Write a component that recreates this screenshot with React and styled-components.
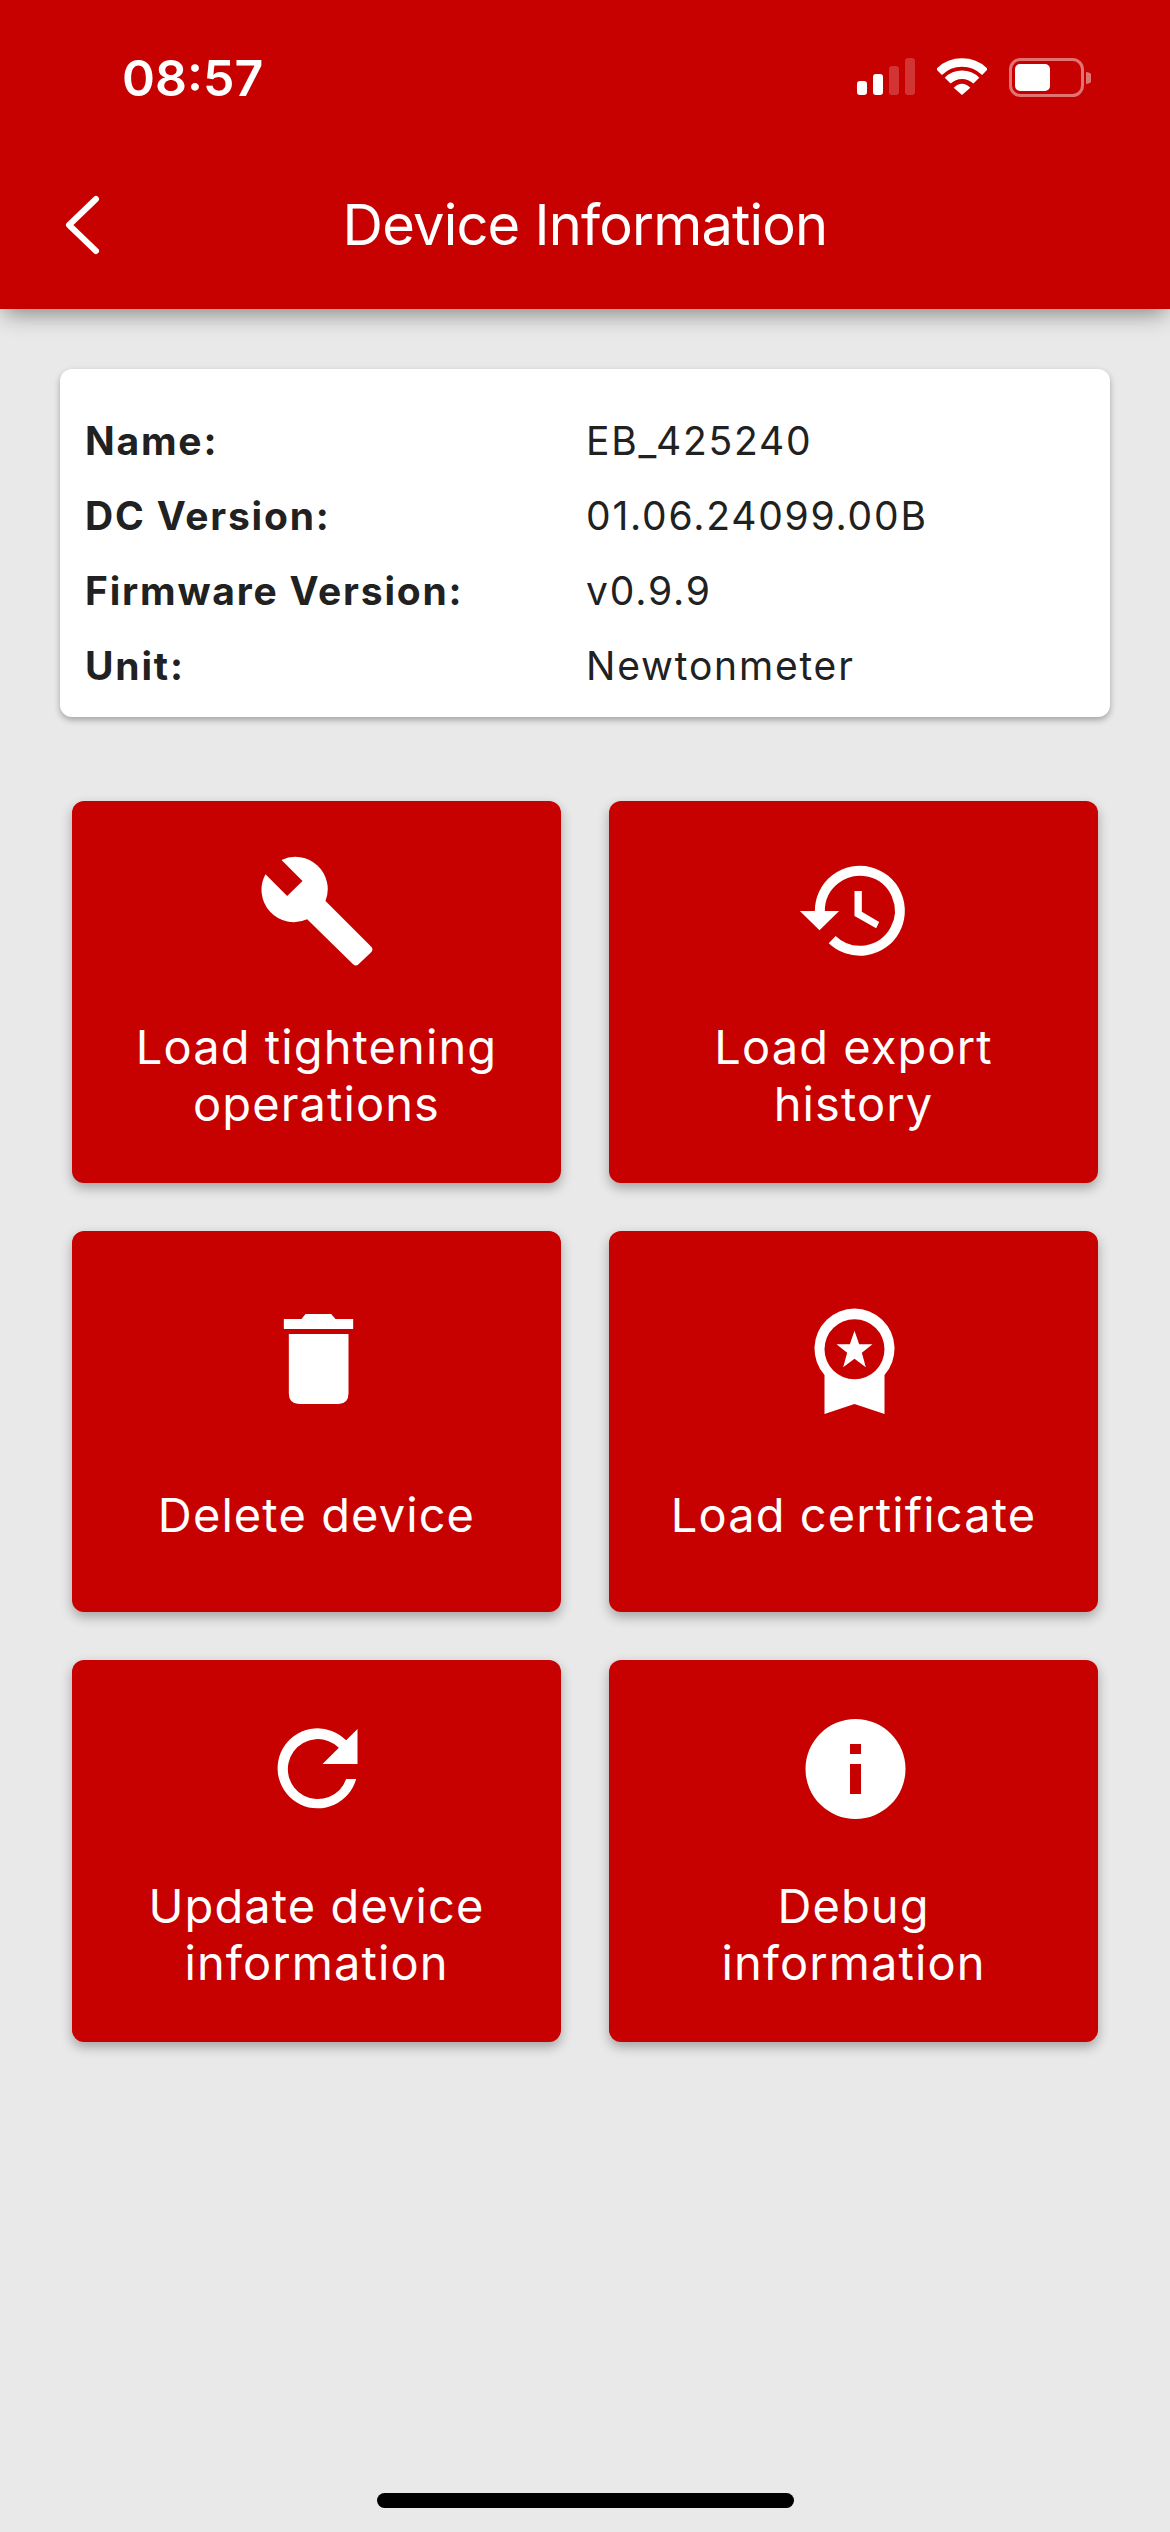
import React from 'react';
import styled, { createGlobalStyle } from 'styled-components';

const RED = '#c70000';

const GlobalStyle = createGlobalStyle`
  html, body {
    margin: 0;
    padding: 0;
    background: #e9e9e9;
  }
  body {
    font-family: Inter, "Liberation Sans", sans-serif;
  }
`;

const Page = styled.div`
  height: 2532px;
  display: flex;
  flex-direction: column;
  background: #e9e9e9;
  overflow: hidden;
`;

const Header = styled.header`
  height: 309px;
  flex-shrink: 0;
  box-sizing: border-box;
  background: ${RED};
  color: white;
  box-shadow: 0 8px 22px -4px rgba(0, 0, 0, 0.45);
  display: flex;
  flex-direction: column;
`;

const StatusBar = styled.div`
  height: 156px;
  box-sizing: border-box;
  padding: 58px 79px 0 122px;
  display: flex;
  justify-content: space-between;
  align-items: flex-start;
`;

const Time = styled.span`
  font-size: 50px;
  font-weight: 600;
  line-height: 40px;
`;

const StatusIcons = styled.div`
  display: flex;
  align-items: flex-start;
  gap: 22px;
`;

const NavBar = styled.div`
  display: grid;
  grid-template-columns: 120px 1fr 120px;
  align-items: center;
  height: 138px;
`;

const BackButton = styled.button`
  background: none;
  border: none;
  padding: 0 0 0 64px;
  display: flex;
  color: white;
`;

const Title = styled.h1`
  margin: 0;
  text-align: center;
  font-size: 56px;
  font-weight: 400;
  letter-spacing: -0.8px;
`;

const InfoCard = styled.section`
  margin: 60px 60px 0;
  padding: 34px 25px 14px;
  background: white;
  border-radius: 12px;
  box-shadow: 0 3px 6px rgba(0, 0, 0, 0.3);
`;

const InfoRow = styled.div`
  display: grid;
  grid-template-columns: 501px 1fr;
  height: 75px;
  align-items: center;
  font-size: 39px;
  letter-spacing: 1.8px;
  color: #212121;
`;

const InfoLabel = styled.span`
  font-weight: 700;
`;

const InfoValue = styled.span`
  font-weight: 400;
`;

const TileGrid = styled.div`
  margin: 84px 72px 0;
  display: grid;
  grid-template-columns: repeat(2, 489px);
  grid-auto-rows: 381.5px;
  gap: 48px;
`;

const Tile = styled.button`
  background: ${RED};
  border: none;
  border-radius: 12px;
  box-shadow: 0 5px 12px rgba(0, 0, 0, 0.3);
  color: white;
  padding: 0;
  display: flex;
  flex-direction: column;
  align-items: center;
  justify-content: center;
  gap: ${(p) => (p.$single ? 68 : 48)}px;
  font-family: inherit;
`;

const TileLabel = styled.span`
  font-size: 47px;
  font-weight: 400;
  line-height: 56.5px;
  letter-spacing: 1.1px;
  text-align: center;
  white-space: pre-line;
`;

const HomeBar = styled.div`
  margin: auto auto 24px;
  width: 417px;
  height: 15px;
  border-radius: 8px;
  background: black;
`;

const Signal = () => (
  <svg width="58" height="38" viewBox="0 0 58 38" fill="white">
    <rect x="0" y="23" width="10" height="14" rx="3" />
    <rect x="16" y="16" width="10" height="21" rx="3" />
    <rect x="32" y="8" width="10" height="29" rx="3" opacity="0.2" />
    <rect x="48" y="0" width="10" height="37" rx="3" opacity="0.2" />
  </svg>
);

const Wifi = () => (
  <svg width="50" height="37" viewBox="320 57 150 111">
    <g fill="none" stroke="white" strokeWidth="25">
      <path d="M326 99A98 98 0 0 1 464 99" />
      <path d="M352 125A61 61 0 0 1 438 125" />
    </g>
    <path d="M395 168L370 146Q395 122 420 146Z" fill="white" />
  </svg>
);

const Battery = () => (
  <svg width="82" height="39" viewBox="0 0 82 39">
    <rect x="1.5" y="1.5" width="72" height="36" rx="10" fill="none" stroke="white" strokeOpacity="0.45" strokeWidth="3" />
    <rect x="6" y="6" width="35" height="27" rx="5" fill="white" />
    <path d="M77 14a7 6 0 0 1 0 12z" fill="white" opacity="0.45" />
  </svg>
);

const Chevron = () => (
  <svg width="36" height="60" viewBox="0 0 36 60" fill="none" stroke="currentColor" strokeWidth="6" strokeLinecap="round" strokeLinejoin="round">
    <path d="M32 4L5 30L32 56" />
  </svg>
);

const TileIcon = styled.svg.attrs({ width: 120, height: 120, fill: 'white' })`
  display: block;
  flex-shrink: 0;
`;

const WrenchIcon = () => (
  <TileIcon viewBox="49.5 30 360 360">
    <path d="M123 57A97 97 0 0 1 255 180L393 318Q399 326 392 334L354 370Q346 378 337 369L200 235A97 97 0 0 1 75 100L140 165L186 120Z" />
  </TileIcon>
);

const HistoryIcon = () => (
  <TileIcon viewBox="40.5 30 360 360">
    <path d="M118 210A120 120 0 1 1 155 296" fill="none" stroke="white" strokeWidth="30" />
    <path d="M58 210H176L117 268Z" />
    <path d="M222 150H244V212L296 243L287 262L222 225Z" />
  </TileIcon>
);

const TrashIcon = () => (
  <TileIcon viewBox="-10.5 -3 360 360">
    <path d="M70 57H123L135 42H212L225 57H278V87H70Z" />
    <path d="M85 102H264V280Q264 312 234 312H115Q85 312 85 280Z" />
  </TileIcon>
);

const AwardIcon = () => (
  <TileIcon viewBox="40.5 27 360 360">
    <path fillRule="evenodd" d="M132 255A120 120 0 1 1 312 255V372L222 342L132 372ZM222 88A90 90 0 1 0 222 268A90 90 0 1 0 222 88Z" />
    <path d="M222 122L236 163H276L244 188L256 232L222 206L188 232L200 188L168 163H208Z" />
  </TileIcon>
);

const RefreshIcon = () => (
  <TileIcon viewBox="-10.5 0 360 360">
    <path d="M287 207A120 120 0 1 1 257 91L291 57V162H186L235 113A90 90 0 1 0 257 207Z" />
  </TileIcon>
);

const InfoIcon = () => (
  <TileIcon viewBox="-1.5 0 120 120">
    <path fillRule="evenodd" d="M60 9A50 50 0 1 1 60 109A50 50 0 1 1 60 9ZM54.5 34V44H65.5V34ZM54.5 54V84H65.5V54Z" />
  </TileIcon>
);

const infoRows = [
  ['Name:', 'EB_425240'],
  ['DC Version:', '01.06.24099.00B'],
  ['Firmware Version:', 'v0.9.9'],
  ['Unit:', 'Newtonmeter'],
];

const tiles = [
  { label: 'Load tightening\noperations', icon: <WrenchIcon /> },
  { label: 'Load export\nhistory', icon: <HistoryIcon /> },
  { label: 'Delete device', icon: <TrashIcon />, single: true },
  { label: 'Load certificate', icon: <AwardIcon />, single: true },
  { label: 'Update device\ninformation', icon: <RefreshIcon /> },
  { label: 'Debug\ninformation', icon: <InfoIcon /> },
];

export default function App() {
  return (
    <Page>
      <GlobalStyle />
      <Header>
        <StatusBar>
          <Time>08:57</Time>
          <StatusIcons>
            <Signal />
            <Wifi />
            <Battery />
          </StatusIcons>
        </StatusBar>
        <NavBar>
          <BackButton>
            <Chevron />
          </BackButton>
          <Title>Device Information</Title>
        </NavBar>
      </Header>

      <InfoCard>
        {infoRows.map(([label, value]) => (
          <InfoRow key={label}>
            <InfoLabel>{label}</InfoLabel>
            <InfoValue>{value}</InfoValue>
          </InfoRow>
        ))}
      </InfoCard>

      <TileGrid>
        {tiles.map((tile) => (
          <Tile key={tile.label} $single={tile.single}>
            {tile.icon}
            <TileLabel>{tile.label}</TileLabel>
          </Tile>
        ))}
      </TileGrid>

      <HomeBar />
    </Page>
  );
}
